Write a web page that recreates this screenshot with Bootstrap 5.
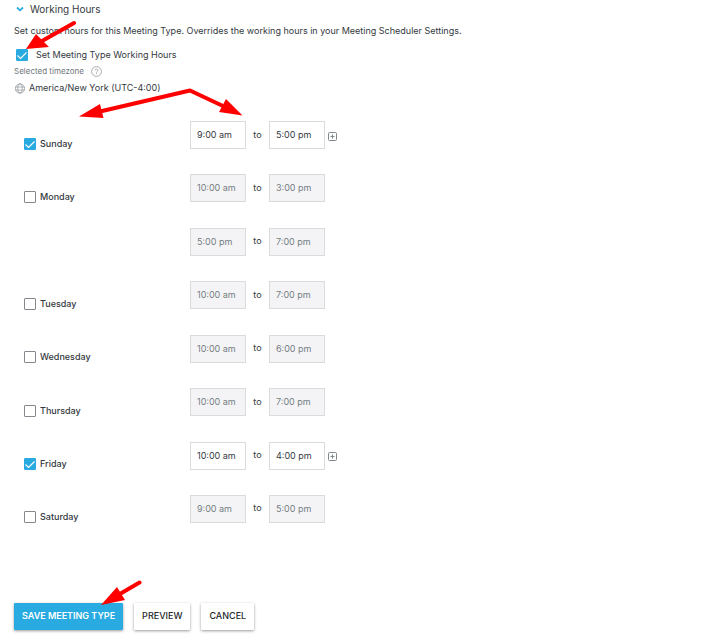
<!DOCTYPE html>
<html lang="en">
<head>
<meta charset="utf-8">
<meta name="viewport" content="width=device-width, initial-scale=1">
<title>Working Hours</title>
<link href="https://cdn.jsdelivr.net/npm/bootstrap@5.3.0/dist/css/bootstrap.min.css" rel="stylesheet">
<style>
body{font-family:Inter,"Open Sans",sans-serif;font-size:9px;line-height:16px;color:#34393e;background:#fff}
.page-wrap{padding:1px 14px 4px}
.section-toggle{font-size:10px;line-height:16px;color:#34393e;gap:4px}
.intro{margin-top:6px}
.set-hours{margin-top:8px;gap:8px;padding-left:2px}
.tick.form-check-input{width:12px;height:12px;margin:0;border:1px solid #85898d;border-radius:1px;flex:none;background-size:12px 12px}
.tick.form-check-input:checked{background-color:#29abe2;border-color:#29abe2;border-radius:1px;background-image:url("data:image/svg+xml,%3Csvg xmlns='http://www.w3.org/2000/svg' viewBox='0 0 12 12'%3E%3Cpath d='M1.500 6.500l3 3 6-6' fill='none' stroke='%23fff' stroke-width='1.1'/%3E%3C/svg%3E")}
.zone-label{font-size:8px;color:#70777c;gap:7px}
.zone-name{margin-top:1px;gap:4px}
.days{min-height:402px;margin-top:25px;padding-left:10px}
.day-row{height:28px}
.day-cell{width:166px;gap:4px;padding-top:17px;font-weight:500}
.time.form-control{width:56px;height:28px;padding:0 6px 1px;font-size:9px;line-height:16px;border:1px solid #d9dbdd;border-radius:0;color:#34393e;background:#fff}
.time.form-control:disabled{background:#f4f4f7;color:#747e81;opacity:1}
.between{width:23px;text-align:center;padding-bottom:1px}
.add{margin-left:3px;margin-top:2px;width:9px;height:9px}
.actions{margin-top:80px;gap:11px}
.act.btn{height:27px;padding:0 8px 1px;border:0;border-radius:1px;font-size:9px;line-height:16px;font-weight:500;color:#24292d;background:#fff;box-shadow:0 1px 3px rgba(0,0,0,.4)}
.act.main-act{background:#29abe2;color:#fff;font-weight:600}
.pointers{pointer-events:none}
</style>
</head>
<body>
<main class="page-wrap position-relative">
  <button type="button" class="section-toggle btn p-0 border-0 d-flex align-items-center" aria-expanded="true">
    <svg width="12" height="8" viewBox="0 0 12 8" aria-hidden="true"><path d="M3 2.500l3 2.800 3-2.800" fill="none" stroke="#29abe2" stroke-width="1.800"/></svg>
    <span>Working Hours</span>
  </button>
  <p class="intro mb-0">Set custom hours for this Meeting Type. Overrides the working hours in your Meeting Scheduler Settings.</p>
  <div class="set-hours d-flex align-items-center">
    <input class="tick form-check-input" type="checkbox" id="custom" checked>
    <label for="custom">Set Meeting Type Working Hours</label>
  </div>
  <div class="zone-label d-flex align-items-center">
    <span>Selected timezone</span>
    <svg width="11" height="11" viewBox="0 0 11 11" fill="none" stroke="#858b90" stroke-width=".7" role="img" aria-label="Help"><circle cx="5.500" cy="5.500" r="4.900"/><path d="M4 4.400C4 2.500 7 2.500 7 4.300c0 1-1.500 1.100-1.500 2.300M5.500 7.300v1"/></svg>
  </div>
  <div class="zone-name d-flex align-items-center">
    <svg width="11" height="11" viewBox="0 0 11 11" fill="none" stroke="#7c8388" stroke-width=".6" aria-hidden="true"><circle cx="6" cy="5.500" r="4.600"/><ellipse cx="6" cy="5.500" rx="2.200" ry="4.600"/><path d="M1.400 4h9.200M1.400 7h9.200"/></svg>
    <span>America/New York (UTC-4:00)</span>
  </div>

  <div class="days d-flex flex-column justify-content-between">
    <div class="day-row d-flex align-items-center">
      <div class="day-cell d-flex align-items-center"><input class="tick form-check-input" type="checkbox" id="sun" checked><label for="sun">Sunday</label></div>
      <input class="time form-control" value="9:00 am" aria-label="Sunday start"><span class="between">to</span><input class="time form-control" value="5:00 pm" aria-label="Sunday end">
      <button type="button" class="add btn p-0 border-0 d-flex" aria-label="Add Sunday hours"><svg width="9" height="9" viewBox="0 0 9 9" fill="none" stroke="#7f898c"><rect x=".5" y=".5" width="8" height="8" rx="1"/><path d="M2.500 4.500h4M4.500 2.500v4"/></svg></button>
    </div>
    <div class="day-row d-flex align-items-center">
      <div class="day-cell d-flex align-items-center"><input class="tick form-check-input" type="checkbox" id="mon"><label for="mon">Monday</label></div>
      <input class="time form-control" value="10:00 am" aria-label="Monday start" disabled><span class="between">to</span><input class="time form-control" value="3:00 pm" aria-label="Monday end" disabled>
    </div>
    <div class="day-row d-flex align-items-center">
      <div class="day-cell"></div>
      <input class="time form-control" value="5:00 pm" aria-label="Monday second start" disabled><span class="between">to</span><input class="time form-control" value="7:00 pm" aria-label="Monday second end" disabled>
    </div>
    <div class="day-row d-flex align-items-center">
      <div class="day-cell d-flex align-items-center"><input class="tick form-check-input" type="checkbox" id="tue"><label for="tue">Tuesday</label></div>
      <input class="time form-control" value="10:00 am" aria-label="Tuesday start" disabled><span class="between">to</span><input class="time form-control" value="7:00 pm" aria-label="Tuesday end" disabled>
    </div>
    <div class="day-row d-flex align-items-center">
      <div class="day-cell d-flex align-items-center"><input class="tick form-check-input" type="checkbox" id="wed"><label for="wed">Wednesday</label></div>
      <input class="time form-control" value="10:00 am" aria-label="Wednesday start" disabled><span class="between">to</span><input class="time form-control" value="6:00 pm" aria-label="Wednesday end" disabled>
    </div>
    <div class="day-row d-flex align-items-center">
      <div class="day-cell d-flex align-items-center"><input class="tick form-check-input" type="checkbox" id="thu"><label for="thu">Thursday</label></div>
      <input class="time form-control" value="10:00 am" aria-label="Thursday start" disabled><span class="between">to</span><input class="time form-control" value="7:00 pm" aria-label="Thursday end" disabled>
    </div>
    <div class="day-row d-flex align-items-center">
      <div class="day-cell d-flex align-items-center"><input class="tick form-check-input" type="checkbox" id="fri" checked><label for="fri">Friday</label></div>
      <input class="time form-control" value="10:00 am" aria-label="Friday start"><span class="between">to</span><input class="time form-control" value="4:00 pm" aria-label="Friday end">
      <button type="button" class="add btn p-0 border-0 d-flex" aria-label="Add Friday hours"><svg width="9" height="9" viewBox="0 0 9 9" fill="none" stroke="#7f898c"><rect x=".5" y=".5" width="8" height="8" rx="1"/><path d="M2.500 4.500h4M4.500 2.500v4"/></svg></button>
    </div>
    <div class="day-row d-flex align-items-center">
      <div class="day-cell d-flex align-items-center"><input class="tick form-check-input" type="checkbox" id="sat"><label for="sat">Saturday</label></div>
      <input class="time form-control" value="9:00 am" aria-label="Saturday start" disabled><span class="between">to</span><input class="time form-control" value="5:00 pm" aria-label="Saturday end" disabled>
    </div>
  </div>

  <div class="actions d-flex">
    <button type="button" class="act main-act btn">SAVE MEETING TYPE</button>
    <button type="button" class="act btn">PREVIEW</button>
    <button type="button" class="act btn">CANCEL</button>
  </div>

  <!-- Red callout arrows laid over the form -->
  <svg class="pointers position-absolute top-0 start-0" width="260" height="620" viewBox="0 0 260 620" aria-hidden="true">
    <g fill="none" stroke="#f00" stroke-width="4" stroke-linecap="round" stroke-linejoin="round">
      <path d="M74 23L42 41M100 111.500L190 90.500L224 106.500M139.500 582.500L119 594.500"/>
    </g>
    <path fill="#f00" d="M26 49L36 34L49 47ZM79 116.500L100 104L103.500 118ZM242.500 115.500L226 99L219 112ZM101 605L117 587L125 600Z"/>
  </svg>
</main>
<script src="https://cdn.jsdelivr.net/npm/bootstrap@5.3.0/dist/js/bootstrap.bundle.min.js"></script>
</body>
</html>
